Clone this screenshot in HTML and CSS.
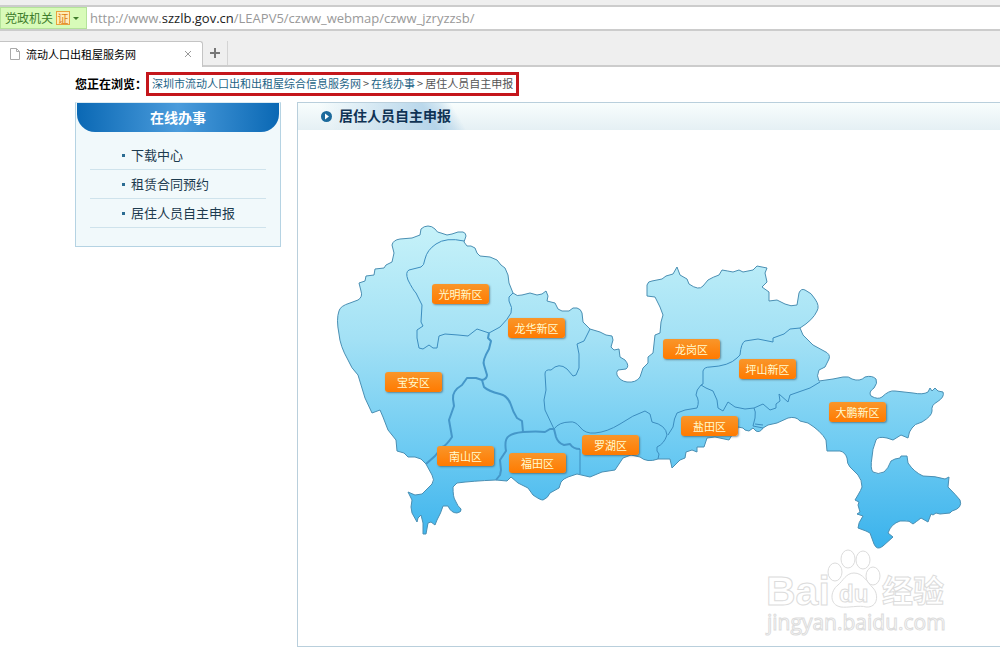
FILE: index.html
```
<!DOCTYPE html>
<html lang="zh-CN">
<head>
  <meta charset="utf-8">
  <title>流动人口出租屋服务网</title>
  <link rel="stylesheet" href="styles.css">
</head>
<body>
  <header class="browser">
    <div class="address-bar">
      <button type="button" class="site-badge">党政机关 <span class="cert">证</span><span class="arrow"></span></button>
      <div class="url" role="textbox" aria-label="地址" contenteditable="true" spellcheck="false">http://www.<b>szzlb.gov.cn</b>/LEAPV5/czww_webmap/czww_jzryzzsb/</div>
    </div>
    <div class="tabs">
      <div class="tab">
        <svg class="file-icon" width="12" height="14" viewBox="0 0 12 14"><path d="M1.500 1.500H7.500L10.500 4.500V12.500H1.500ZM7.500 1.500V4.500H10.500" fill="#fff" stroke="#aaa"/></svg>
        <span class="tab-title">流动人口出租屋服务网</span>
        <button type="button" class="tab-close" aria-label="关闭"><svg width="8" height="8" viewBox="0 0 8 8"><path d="M1 1L7 7M7 1L1 7" stroke="#999"/></svg></button>
      </div>
      <button type="button" class="tab-new" aria-label="新标签页"><svg width="10" height="10" viewBox="0 0 10 10"><path d="M5 0V10M0 5H10" stroke="#777" stroke-width="2"/></svg></button>
    </div>
  </header>

  <nav class="breadcrumb">
    <span class="crumb-label">您正在浏览：</span>
    <span class="crumb-box"><a href="#">深圳市流动人口出和出租屋综合信息服务网</a><span>&gt;</span><a href="#">在线办事</a><span>&gt;</span><span>居住人员自主申报</span></span>
  </nav>

  <div class="page">
    <aside class="sidebar">
      <h2>在线办事</h2>
      <ul>
        <li><a href="#">下载中心</a></li>
        <li><a href="#">租赁合同预约</a></li>
        <li><a href="#">居住人员自主申报</a></li>
      </ul>
    </aside>

    <main class="panel">
      <div class="panel-head">
        <svg width="11" height="11" viewBox="0 0 11 11"><circle cx="5.500" cy="5.500" r="5.500" fill="#1c6a9c"/><path d="M4 2.500L8 5.500L4 8.500Z" fill="#fff"/></svg>
        <h1>居住人员自主申报</h1>
      </div>
      <div class="map">
        <svg class="map-shape" width="702" height="516" viewBox="298 130 702 516">
          <defs>
            <linearGradient id="sea" gradientUnits="userSpaceOnUse" x1="0" y1="226" x2="0" y2="548">
              <stop offset="0" stop-color="#c6f2f9"/>
              <stop offset="0.350" stop-color="#a3e1f5"/>
              <stop offset="0.700" stop-color="#6bcaf2"/>
              <stop offset="1" stop-color="#3ab2ec"/>
            </linearGradient>
          </defs>
          <!-- coastline and outer border -->
          <path class="land" fill="url(#sea)" d="M420 235L421 229Q424 226 428 226Q432 226 435 229Q437 233 441 233L447 235L452 234L458 232L463 232Q466 233 466 236L464 242L467 246L471 246L475 248L477 253L480 256L490 257L497 260L501 265L505 268L508 275L509 283L513 293
            Q517 297 522 295L530 293L537 295L542 294L546 291L548 296L547 301L555 303L558 309L562 311L569 311L573 308L577 308Q581 309 582 313L583 322L590 329L600 332L606 335L612 336L613 340L611 347L614 350L619 349L620 357L625 360Q630 366 626 369L618 370Q616 372 617 375Q620 381 627 382Q636 383 640 377L643 368L648 363L648 357L653 353L655 335L660 333L661 322L663 315L660 307L655 297L647 296L647 285Q648 281 652 281
            L662 279L666 276L673 274L677 267L680 275L687 279L689 284Q699 291 703 286L708 280Q713 277 719 275L722 270Q728 271 733 272L739 270L743 272L753 270L757 266L767 268L765 273L767 282L762 287L769 292L769 301L777 300L785 304Q791 307 797 305L799 293Q801 288 805 290Q812 293 815 299Q820 306 817 311Q813 320 800 328L803 335L813 345L824 351Q831 354 829 359L825 367L819 370Q816 376 819 381
            L833 379L843 377Q849 376 852 379Q860 382 865 377Q872 375 876 379Q878 383 874 388Q868 392 871 396Q878 400 882 397Q889 390 895 391L913 393Q923 395 928 392L930 388L932 391L935 388L938 391L943 392Q945 397 937 402Q931 405 932 411Q932 416 922 422Q914 424 912 428Q909 431 908 438L901 435L893 440L887 438Q878 436 876 440Q872 450 872 457Q870 469 873 472Q878 475 884 472Q888 469 891 461L895 459L900 458L901 456L907 456L908 463Q914 472 923 476Q936 476 945 479L949 477L948 487Q956 495 960 500Q963 508 952 511L950 513L940 514L936 513L933 515L931 514L928 522L921 518Q916 522 913 524Q909 520 905 521L900 521Q891 524 888 533L893 537L883 546Q877 551 874 544L870 533L866 531L858 528Q858 523 863 516L857 514L860 512L858 505L859 502L855 500L858 495Q861 490 862 487Q862 480 858 475L850 467Q847 464 847 458Q845 452 840 451L827 451L826 440Q821 431 808 423L800 421Q796 416 788 418
            L777 423L768 425L763 428Q760 433 756 431L753 428L749 431L745 430L743 428L738 427L736 435L732 435L729 440L715 437L707 438L704 447L697 447L697 452L692 450L686 452L685 458L680 460L672 468L670 459L658 459Q647 463 640 457L631 455L623 458L619 464L615 470L602 472L590 477L577 474L568 477L564 479L561 482L559 488L550 493Q548 498 543 500Q540 500 533 495L528 488L518 483L511 477L507 481L496 480
            Q472 481 457 483L453 487Q453 497 455 500Q458 507 461 509Q462 512 457 513Q451 513 448 506L443 506Q441 513 437 520L435 525L431 522L428 523L426 534L423 534L423 523L421 515L418 518L417 522L412 513L411 507L412 500L408 492L415 495L422 494L432 484Q435 480 432 475L426 464L421 459L415 457L408 457L404 453L397 451L396 440L388 430L383 417L380 410L372 413L365 398L358 375
            Q351 368 348 360Q340 346 339 334Q336 319 339 311Q340 306 350 303L358 300Q363 297 361 291L359 283L365 281L366 276L374 275L375 269L384 268L386 265L392 262L394 253L392 245Q393 240 400 239L412 238Z"/>
          <!-- district borders -->
          <g class="border">
            <path d="M464 241Q446 237 436 244Q427 250 425 259Q424 266 421 267L409 270Q405 272 408 280Q413 290 416 293L422 305L421 322L423 326L417 330Q416 337 419 348L423 349L429 345L433 348L437 348L439 336L445 334L458 335L468 336L477 329L489 333L500 327Q508 319 511 313Q513 308 509 301L509 297L513 293"/>
            <path d="M590 329L587 335L584 341L577 344L579 354L579 368L576 375L573 376L567 369Q559 362 551 370Q545 369 545 374L546 390L544 400L545 410L554 429"/>
            <path d="M554 429Q559 422 570 422Q575 421 580 427Q585 434 595 433Q607 432 620 424Q633 415 645 411L650 414L652 422Q666 425 667 435Q664 444 657 447L657 451L659 454L658 459"/>
            <path d="M668 435L673 427Q674 418 677 413L685 410L697 408Q700 401 696 395Q696 390 701 385L706 388L713 391L717 400L718 408L723 411L728 402L735 407L745 409L754 408Q756 411 755 418L753 426L763 428M755 424L763 425"/>
            <path d="M701 385L703 384L703 371Q704 367 710 367Q729 366 737 358L740 355Q741 343 745 341L758 339L768 341L773 342L773 338L784 334L790 329L800 328"/>
            <path d="M754 408L763 404L770 410L776 408L776 404L780 401L779 394L788 402L790 395L810 388L820 382"/>
          </g>
          <g class="border thick">
            <path d="M489 333L488 338L491 341L489 349Q482 361 484 365L487 375Q487 379 482 380L476 378L467 378L462 385Q452 391 453 399L454 406L449 420L452 437Q446 446 442 447L435 456L426 464"/>
            <path d="M482 380L484 387Q488 391 500 394Q508 396 511 405Q513 412 517 418L522 421L523 432"/>
            <path d="M496 480L500 475L501 470L500 460L506 451Q504 439 509 436Q513 433 523 432Q537 431 545 432L550 429L554 429L556 437Q558 443 564 445L570 444Q573 449 580 449"/>
          </g>
          <path class="border" d="M580 449V474"/>
        </svg>
        <a href="#" class="pin guangming">光明新区</a>
        <a href="#" class="pin longhua">龙华新区</a>
        <a href="#" class="pin baoan">宝安区</a>
        <a href="#" class="pin nanshan">南山区</a>
        <a href="#" class="pin futian">福田区</a>
        <a href="#" class="pin luohu">罗湖区</a>
        <a href="#" class="pin longgang">龙岗区</a>
        <a href="#" class="pin pingshan">坪山新区</a>
        <a href="#" class="pin yantian">盐田区</a>
        <a href="#" class="pin dapeng">大鹏新区</a>
        <svg class="watermark" width="190" height="96" viewBox="760 544 190 96">
          <text class="wm-bai" x="766" y="605">Bai</text>
          <g>
            <ellipse cx="835" cy="572" rx="7" ry="9"/>
            <ellipse cx="848" cy="559" rx="7" ry="9"/>
            <ellipse cx="863" cy="560" rx="7" ry="9"/>
            <ellipse cx="873" cy="576" rx="7" ry="9"/>
            <path d="M854 573C846 573 843 581 838 585C830 591 829 605 841 607C847 608 860 605 866 607C878 608 879 594 873 588C867 582 863 573 854 573Z"/>
          </g>
          <text class="wm-du" x="839" y="602">du</text>
          <text class="wm-jy" x="882" y="602">经验</text>
          <text class="wm-url" x="767" y="630">jingyan.baidu.com</text>
        </svg>
      </div>
    </main>
  </div>
</body>
</html>
```
FILE: styles.css
```
body {
  margin: 0;
  background: #fff;
  font-family: "Noto Sans CJK SC", sans-serif;
  font-size: 12px;
  overflow-x: hidden;
}

a {
  text-decoration: none;
}

button {
  padding: 0;
  border: 0;
  background: none;
  font-family: inherit;
  cursor: pointer;
}

/* browser bars */
.browser {
  padding-top: 5px;
  background: #efefef;
  border-bottom: 2px solid #ccc;
}

.address-bar {
  display: flex;
  height: 22px;
  background: #fff;
  border-top: 2px solid #ccc;
  border-bottom: 2px solid #ccc;
}

.site-badge {
  display: flex;
  align-items: center;
  gap: 3px;
  width: 87px;
  box-sizing: border-box;
  padding-left: 4px;
  border: 1px solid #b4e39a;
  background: #d8fbb9;
  color: #3f7d2c;
  font-size: 12px;
  line-height: 20px;
  white-space: nowrap;
}

.cert {
  width: 12px;
  height: 12px;
  border: 1px solid #e8a33c;
  background: #ffecb8;
  color: #dc7c10;
  font-size: 11px;
  line-height: 12px;
}

.arrow {
  border: 3px solid transparent;
  border-top-color: #3f7d2c;
  border-bottom: 0;
}

.url {
  flex: 1;
  padding-left: 3px;
  color: #999;
  font-family: "Open Sans", sans-serif;
  font-size: 13px;
  line-height: 22px;
  outline: none;
}

.url b {
  color: #222;
  font-weight: normal;
}

.tabs {
  display: flex;
  align-items: flex-end;
  height: 34px;
}

.tab {
  display: flex;
  align-items: center;
  width: 203px;
  height: 26px;
  margin-bottom: -2px;
  box-sizing: border-box;
  padding: 0 10px 2px 9px;
  background: #fff;
  border-top: 1px solid #c4c4c4;
  border-right: 1px solid #c4c4c4;
  border-top-right-radius: 3px;
}

.tab-title {
  flex: 1;
  padding-left: 5px;
  font-size: 11px;
}

.tab-close,
.tab-new {
  display: flex;
}

.tab-new {
  align-items: center;
  height: 24px;
  padding: 0 7px 0 7px;
  border-right: 1px solid #d4d4d4;
}

/* breadcrumb */
.breadcrumb {
  display: flex;
  align-items: center;
  height: 35px;
  padding-left: 75px;
  box-sizing: border-box;
}

.crumb-label {
  width: 71px;
  font-weight: bold;
  white-space: nowrap;
  padding-bottom: 3px;
}

.crumb-box {
  display: flex;
  gap: 2px;
  padding: 0 3px 1px;
  border: 3px solid #c4161b;
  color: #555;
  font-size: 11px;
  line-height: 17px;
  white-space: nowrap;
  margin-bottom: 2px;
}

.crumb-box a {
  color: #1c6386;
}

/* content */
.page {
  display: flex;
  align-items: flex-start;
  gap: 16px;
  padding-left: 75px;
}

.sidebar {
  width: 206px;
  flex-shrink: 0;
  box-sizing: border-box;
  padding: 0 1px 18px;
  border: 1px solid #b5d3e3;
  border-top-color: #dcebf2;
  background: #f1f9fb;
}

.sidebar h2 {
  margin: 0;
  border-radius: 0 0 18px 18px;
  background: linear-gradient(90deg, #0a68b4, #4b9cdc 50%, #0a68b4);
  color: #fff;
  font-size: 14px;
  line-height: 29px;
  text-align: center;
}

.sidebar ul {
  margin: 0;
  padding: 9px 13px 0;
  list-style: none;
}

.sidebar li {
  display: flex;
  align-items: center;
  height: 28px;
  padding-left: 32px;
  border-bottom: 1px solid #cfe3ec;
}

.sidebar li::before {
  content: "";
  width: 3px;
  height: 3px;
  margin-right: 6px;
  background: #2b6c92;
}

.sidebar li a {
  padding-bottom: 2px;
  color: #1d3b4f;
  font-size: 13px;
}

.panel {
  flex: 1;
  min-width: 702px;
  border: 1px solid #b9cfdc;
  border-right: 0;
}

.panel-head {
  display: flex;
  align-items: center;
  gap: 7px;
  height: 27px;
  padding-left: 23px;
  background:
    linear-gradient(60deg, transparent 30px, rgba(160, 200, 228, 0.7) 120px, rgba(160, 200, 228, 0.4) 135px, transparent 146px),
    linear-gradient(#f8fdfd, #e5f0f4);
}

.panel-head h1 {
  margin: 0;
  padding-bottom: 2px;
  color: #0f3354;
  font-size: 14px;
  line-height: 25px;
}

.map {
  position: relative;
}

.map-shape {
  display: block;
}

.land {
  stroke: #4a8fb3;
  stroke-linejoin: round;
}

.border {
  fill: none;
  stroke: #3c8dbf;
  stroke-linejoin: round;
}

.thick {
  stroke-width: 2;
  stroke: #4597c9;
}

.pin {
  position: absolute;
  width: 57px;
  height: 20px;
  border-radius: 3px;
  background: linear-gradient(#f9962a, #ff7a00);
  box-shadow: 1px 1px 2px rgba(60, 80, 90, 0.6);
  color: #fffbd0;
  font-size: 11px;
  line-height: 20px;
  text-align: center;
}

.guangming { left: 134px; top: 154px; }
.longhua { left: 210px; top: 188px; }
.baoan { left: 87px; top: 242px; }
.nanshan { left: 139px; top: 316px; }
.futian { left: 211px; top: 323px; }
.luohu { left: 284px; top: 305px; }
.longgang { left: 365px; top: 209px; }
.pingshan { left: 441px; top: 229px; }
.yantian { left: 383px; top: 286px; }
.dapeng { left: 531px; top: 272px; }

.watermark {
  position: absolute;
  left: 462px;
  top: 414px;
  fill: #fff;
  stroke: #dcdcdc;
}

.wm-bai {
  font: bold 41px "Liberation Sans", sans-serif;
}

.wm-du {
  font: bold 24px "Liberation Sans", sans-serif;
}

.wm-jy {
  font: bold 31px "Noto Sans CJK SC", sans-serif;
}

.wm-url {
  font: 21px "Open Sans", sans-serif;
}
```
